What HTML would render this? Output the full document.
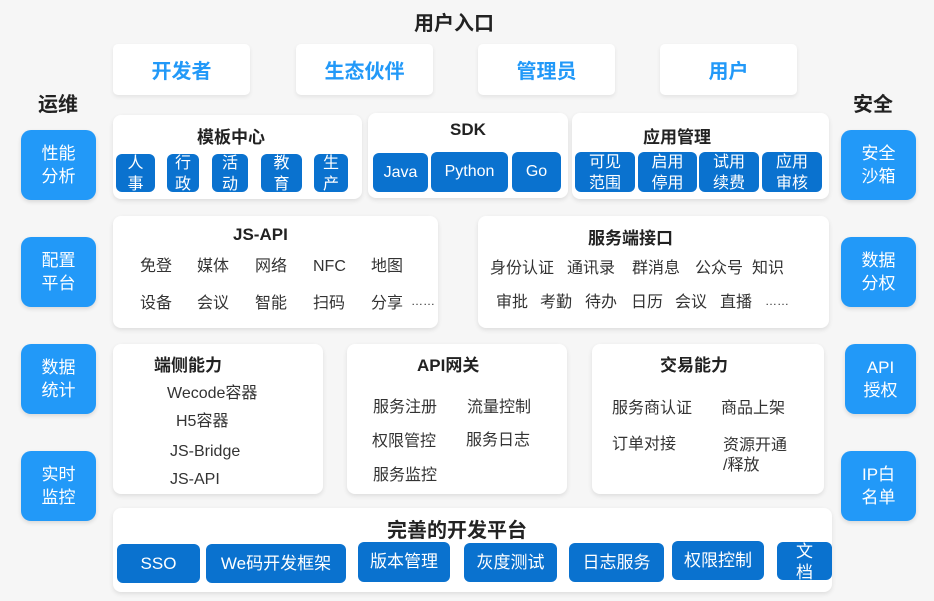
<!DOCTYPE html><html><head><meta charset="utf-8"><style>
body{margin:0;width:934px;height:601px;background:#f6f6f6;position:relative;overflow:hidden;font-family:"Liberation Sans","Noto Sans CJK SC",sans-serif;color:#222}
.a{position:absolute}
.c{position:absolute;background:#fff;border-radius:8px;box-shadow:0 2px 5px rgba(0,0,0,.1)}
.t{position:absolute;font-weight:bold;font-size:17px;color:#222;white-space:nowrap;margin-top:2px}
.i{position:absolute;font-size:16px;color:#333;white-space:nowrap;line-height:20px;margin-top:3px}
.ch{position:absolute;background:#0a72cf;color:#fff;border-radius:6px;display:flex;align-items:center;justify-content:center;text-align:center;font-size:16px;line-height:20px;overflow:visible}
.ch.two{line-height:21px;padding-top:1px;box-sizing:border-box}
.lb{position:absolute;background:#2299f8;color:#fff;border-radius:10px;display:flex;align-items:center;justify-content:center;text-align:center;font-size:17px;line-height:23px;width:75px;height:70px;box-shadow:0 2px 4px rgba(0,0,0,.12)}
.tb{position:absolute;background:#fff;border-radius:5px;box-shadow:0 2px 4px rgba(0,0,0,.08);color:#2299f8;font-weight:bold;font-size:20px;display:flex;align-items:center;justify-content:center;width:137px;height:51px;top:44px}
</style></head><body>
<div class="a" style="left:414px;top:7px;font-weight:bold;font-size:20px">用户入口</div>
<div class="tb" style="left:113px">开发者</div>
<div class="tb" style="left:296px">生态伙伴</div>
<div class="tb" style="left:478px">管理员</div>
<div class="tb" style="left:660px">用户</div>
<div class="a" style="left:38px;top:88px;font-weight:bold;font-size:20px">运维</div>
<div class="a" style="left:853px;top:88px;font-weight:bold;font-size:20px">安全</div>
<div class="lb" style="left:21px;top:130px">性能<br>分析</div>
<div class="lb" style="left:21px;top:237px">配置<br>平台</div>
<div class="lb" style="left:21px;top:344px">数据<br>统计</div>
<div class="lb" style="left:21px;top:451px">实时<br>监控</div>
<div class="lb" style="left:841px;top:130px">安全<br>沙箱</div>
<div class="lb" style="left:841px;top:237px">数据<br>分权</div>
<div class="lb" style="left:845px;top:344px;width:71px">API<br>授权</div>
<div class="lb" style="left:841px;top:451px">IP白<br>名单</div>

<div class="c" style="left:113px;top:115px;width:249px;height:84px"></div>
<div class="t" style="left:197px;top:121px">模板中心</div>
<div class="ch two" style="left:116px;top:154px;width:39px;height:38px">人<br>事</div>
<div class="ch two" style="left:167px;top:154px;width:32px;height:38px">行<br>政</div>
<div class="ch two" style="left:212px;top:154px;width:36px;height:38px">活<br>动</div>
<div class="ch two" style="left:261px;top:154px;width:41px;height:38px">教<br>育</div>
<div class="ch two" style="left:314px;top:154px;width:34px;height:38px">生<br>产</div>

<div class="c" style="left:368px;top:113px;width:200px;height:85px"></div>
<div class="t" style="left:450px;top:118px">SDK</div>
<div class="ch" style="left:373px;top:153px;width:55px;height:39px">Java</div>
<div class="ch" style="left:431px;top:152px;width:77px;height:40px">Python</div>
<div class="ch" style="left:512px;top:152px;width:49px;height:40px">Go</div>

<div class="c" style="left:572px;top:113px;width:257px;height:86px"></div>
<div class="t" style="left:643px;top:121px">应用管理</div>
<div class="ch two" style="left:575px;top:152px;width:60px;height:40px">可见<br>范围</div>
<div class="ch two" style="left:638px;top:152px;width:59px;height:40px">启用<br>停用</div>
<div class="ch two" style="left:699px;top:152px;width:60px;height:40px">试用<br>续费</div>
<div class="ch two" style="left:762px;top:152px;width:60px;height:40px">应用<br>审核</div>

<div class="c" style="left:113px;top:216px;width:325px;height:112px"></div>
<div class="t" style="left:233px;top:223px">JS-API</div>
<div class="i" style="left:140px;top:254px">免登</div><div class="i" style="left:197px;top:254px">媒体</div><div class="i" style="left:255px;top:254px">网络</div><div class="i" style="left:313px;top:254px">NFC</div><div class="i" style="left:371px;top:254px">地图</div>
<div class="i" style="left:140px;top:291px">设备</div><div class="i" style="left:197px;top:291px">会议</div><div class="i" style="left:255px;top:291px">智能</div><div class="i" style="left:313px;top:291px">扫码</div><div class="i" style="left:371px;top:291px">分享</div><div class="i" style="left:411px;top:288px;font-size:12px">……</div>

<div class="c" style="left:478px;top:216px;width:351px;height:112px"></div>
<div class="t" style="left:588px;top:222px">服务端接口</div>
<div class="i" style="left:490px;top:256px">身份认证</div><div class="i" style="left:567px;top:256px">通讯录</div><div class="i" style="left:632px;top:256px">群消息</div><div class="i" style="left:695px;top:256px">公众号</div><div class="i" style="left:752px;top:256px">知识</div>
<div class="i" style="left:496px;top:290px">审批</div><div class="i" style="left:540px;top:290px">考勤</div><div class="i" style="left:585px;top:290px">待办</div><div class="i" style="left:631px;top:290px">日历</div><div class="i" style="left:675px;top:290px">会议</div><div class="i" style="left:720px;top:290px">直播</div><div class="i" style="left:765px;top:288px;font-size:12px">……</div>

<div class="c" style="left:113px;top:344px;width:210px;height:150px"></div>
<div class="t" style="left:154px;top:349px">端侧能力</div>
<div class="i" style="left:167px;top:381px">Wecode容器</div>
<div class="i" style="left:176px;top:409px">H5容器</div>
<div class="i" style="left:170px;top:439px">JS-Bridge</div>
<div class="i" style="left:170px;top:467px">JS-API</div>

<div class="c" style="left:347px;top:344px;width:220px;height:150px"></div>
<div class="t" style="left:417px;top:349px">API网关</div>
<div class="i" style="left:373px;top:395px">服务注册</div><div class="i" style="left:467px;top:395px">流量控制</div>
<div class="i" style="left:372px;top:429px">权限管控</div><div class="i" style="left:466px;top:428px">服务日志</div>
<div class="i" style="left:373px;top:463px">服务监控</div>

<div class="c" style="left:592px;top:344px;width:232px;height:150px"></div>
<div class="t" style="left:660px;top:349px">交易能力</div>
<div class="i" style="left:612px;top:396px">服务商认证</div><div class="i" style="left:721px;top:396px">商品上架</div>
<div class="i" style="left:612px;top:432px">订单对接</div><div class="i" style="left:723px;top:433px">资源开通<br>/释放</div>

<div class="c" style="left:113px;top:508px;width:719px;height:84px"></div>
<div class="a" style="left:387px;top:514px;font-weight:bold;font-size:20px">完善的开发平台</div>
<div class="ch" style="left:117px;top:544px;width:83px;height:39px;font-size:17px">SSO</div>
<div class="ch" style="left:206px;top:544px;width:140px;height:39px;font-size:17px">We码开发框架</div>
<div class="ch" style="left:358px;top:542px;width:92px;height:40px;font-size:17px">版本管理</div>
<div class="ch" style="left:464px;top:543px;width:93px;height:39px;font-size:17px">灰度测试</div>
<div class="ch" style="left:569px;top:543px;width:95px;height:39px;font-size:17px">日志服务</div>
<div class="ch" style="left:672px;top:541px;width:92px;height:39px;font-size:17px">权限控制</div>
<div class="ch two" style="left:777px;top:542px;width:55px;height:38px;font-size:17px">文<br>档</div>
</body></html>
